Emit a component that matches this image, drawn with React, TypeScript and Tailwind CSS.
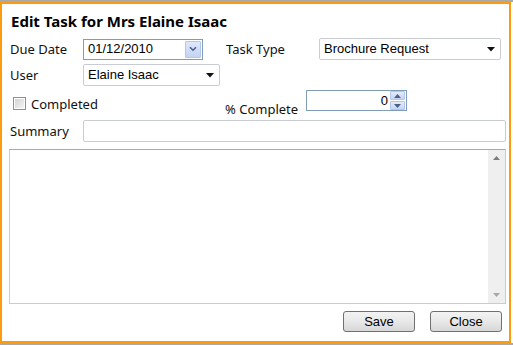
import React from "react";

const label = "text-[13px] text-[#111] leading-none";

function DropArrow() {
  return (
    <svg width="8" height="5" viewBox="0 0 8 5" className="shrink-0">
      <path d="M0 0h8L4 4.5z" fill="#111" />
    </svg>
  );
}

function Select({ value, width }: { value: string; width: string }) {
  return (
    <div
      className={`${width} h-[22px] flex items-center justify-between pl-[4px] pr-[5px] border border-[#c9cdd3] rounded-[2px] bg-white font-['Liberation_Sans',Arial,sans-serif] text-[13px] text-black`}
    >
      <span>{value}</span>
      <DropArrow />
    </div>
  );
}

function DateInput() {
  return (
    <div className="w-[120px] h-[21px] flex items-center justify-between pl-[4px] pr-[1px] border border-[#7f9db9] bg-white font-['Liberation_Sans',Arial,sans-serif] text-[13px] text-black">
      <span>01/12/2010</span>
      <div className="w-[16px] h-[17px] flex items-center justify-center border border-[#b4c6ea] rounded-[1px] bg-gradient-to-b from-[#dfe8fb] to-[#c3d3f4]">
        <svg width="8" height="6" viewBox="0 0 8 6">
          <path d="M1 1.2l3 3 3-3" stroke="#4d6185" strokeWidth="1.6" fill="none" />
        </svg>
      </div>
    </div>
  );
}

function Spinner() {
  return (
    <div className="w-[101px] h-[21px] flex items-center border border-[#7f9db9] bg-white font-['Liberation_Sans',Arial,sans-serif] text-[13px] text-black">
      <span className="flex-1 text-right pr-[2px]">0</span>
      <div className="w-[16px] h-[19px] flex flex-col gap-px pr-[1px]">
        <div className="flex-1 flex items-center justify-center bg-gradient-to-b from-[#e3ebfb] to-[#c6d5f3] border border-[#b4c6ea] rounded-[1px]">
          <svg width="7" height="4" viewBox="0 0 7 4">
            <path d="M0 4L3.5 0 7 4z" fill="#4d6185" />
          </svg>
        </div>
        <div className="flex-1 flex items-center justify-center bg-gradient-to-b from-[#e3ebfb] to-[#c6d5f3] border border-[#b4c6ea] rounded-[1px]">
          <svg width="7" height="4" viewBox="0 0 7 4">
            <path d="M0 0h7L3.5 4z" fill="#4d6185" />
          </svg>
        </div>
      </div>
    </div>
  );
}

function Button({ text }: { text: string }) {
  return (
    <button
      type="button"
      className="w-[72px] h-[21px] flex items-center justify-center border border-[#707070] rounded-[3px] bg-gradient-to-b from-[#f3f3f3] via-[#e8e8e8] to-[#d7d7d7] font-['Liberation_Sans',Arial,sans-serif] text-[13px] text-black"
    >
      {text}
    </button>
  );
}

export default function App() {
  return (
    <div className="w-[513px] h-[345px] bg-white flex flex-col font-['Noto_Sans','Open_Sans',sans-serif] overflow-hidden">
      <div className="h-[2px] bg-[#a9a9a9] shrink-0" />
      <div className="flex">
        <div className="w-[511px] h-[341px] border-2 border-[#fb9b0d] bg-white flex flex-col pl-[7px] pr-[3px]">
          <h1 className="mt-[7px] ml-[2px] text-[15px] font-bold text-black leading-[20px]">
            Edit Task for Mrs Elaine Isaac
          </h1>

          <div className="mt-[7px] flex items-center h-[22px]">
            <span className={`${label} w-[74px] pl-[1px]`}>Due Date</span>
            <DateInput />
            <span className={`${label} ml-[23px] w-[93px]`}>Task Type</span>
            <Select value="Brochure Request" width="w-[182px]" />
          </div>

          <div className="mt-[4px] flex items-center h-[22px]">
            <span className={`${label} w-[74px] pl-[1px]`}>User</span>
            <Select value="Elaine Isaac" width="w-[137px]" />
          </div>

          <div className="mt-[4px] flex h-[22px]">
            <div className="w-[216px] flex items-start pt-[7px] pl-[4px] gap-[5px]">
              <div className="w-[13px] h-[13px] border border-[#8e8f8f] bg-white p-px">
                <div className="w-full h-full bg-gradient-to-br from-[#d4d4d4] to-[#f4f4f4]" />
              </div>
              <span className={`${label} mt-[1px]`}>Completed</span>
            </div>
            <span className={`${label} w-[81px] self-end mb-[-4px]`}>% Complete</span>
            <Spinner />
          </div>

          <div className="mt-[8px] flex items-center h-[22px]">
            <span className={`${label} w-[74px] pl-[1px]`}>Summary</span>
            <div className="w-[423px] h-[22px] border border-[#c9cdd3] rounded-[2px] bg-white" />
          </div>

          <div className="mt-[7px] w-[497px] h-[155px] border border-[#c9cdd3] border-t-[#a9a9a9] bg-white flex justify-end">
            <div className="w-[17px] h-full bg-[#efefef] flex flex-col items-center justify-between py-[6px]">
              <svg width="7" height="4" viewBox="0 0 7 4">
                <path d="M0 4L3.5 0 7 4z" fill="#7d7d7d" />
              </svg>
              <svg width="7" height="4" viewBox="0 0 7 4">
                <path d="M0 0h7L3.5 4z" fill="#a8a8a8" />
              </svg>
            </div>
          </div>

          <div className="mt-[7px] flex justify-end gap-[15px] pr-[4px]">
            <Button text="Save" />
            <Button text="Close" />
          </div>
        </div>
        <div className="w-[2px] bg-white" />
      </div>
      <div className="h-[2px] bg-[#a9a9a9] shrink-0" />
    </div>
  );
}
